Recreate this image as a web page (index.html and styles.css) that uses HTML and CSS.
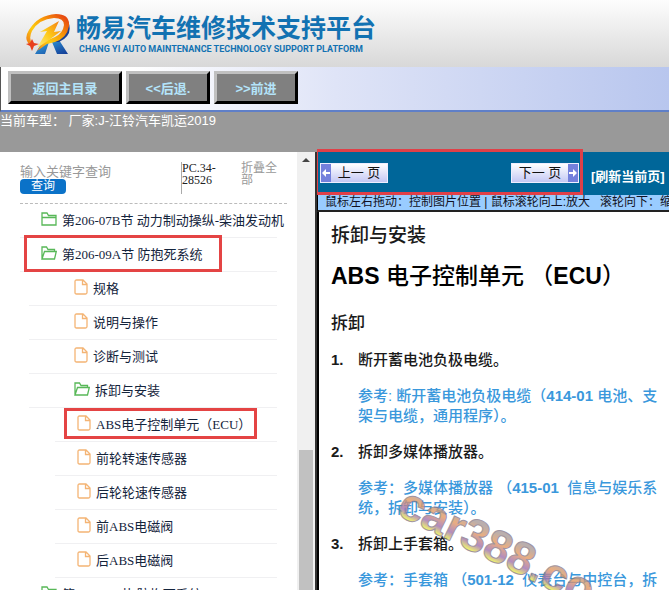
FILE: index.html
```
<!DOCTYPE html>
<html lang="zh-CN">
<head>
    <meta charset="utf-8">
    <title>畅易汽车维修技术支持平台</title>
    <link rel="stylesheet" href="styles.css">
</head>
<body>
    <svg class="symbols" aria-hidden="true">
        <symbol id="folder" viewBox="0 0 16 14">
            <path d="M1 13V1h5l1.500 2.500H15V13z M1 5.500h14"/>
        </symbol>
        <symbol id="folder-open" viewBox="0 0 16 14">
            <path d="M1 13V1h4.500l1.500 2.500h6.500v2 M1 13L3.500 5.500H15.300L13.500 13z"/>
        </symbol>
        <symbol id="file" viewBox="0 0 14 16">
            <path d="M1 2.500Q1 1 2.500 1H9l4 4v8.500q0 1.500-1.500 1.500H2.500Q1 15 1 13.500z M8.500 1v4.500H13"/>
        </symbol>
    </svg>

    <header class="header">
        <svg class="logo" viewBox="0 0 46 42" aria-hidden="true">
            <defs>
                <linearGradient id="flame" x1="0" y1="0.8" x2="0.8" y2="0">
                    <stop offset="0" stop-color="#f07818"/>
                    <stop offset="0.35" stop-color="#fccc10"/>
                    <stop offset="0.65" stop-color="#f99c08"/>
                    <stop offset="1" stop-color="#e84c10"/>
                </linearGradient>
                <linearGradient id="bolt" x1="0" y1="1" x2="1" y2="0">
                    <stop offset="0" stop-color="#fff080"/>
                    <stop offset="0.5" stop-color="#fdc818"/>
                    <stop offset="1" stop-color="#f47a10"/>
                </linearGradient>
                <linearGradient id="leg" x1="0" y1="0" x2="1" y2="1">
                    <stop offset="0" stop-color="#38b0ea"/>
                    <stop offset="1" stop-color="#123a94"/>
                </linearGradient>
            </defs>
            <path fill="url(#leg)" d="M16 31L24 29L20 41H10z M27 29L34 27L43 41H32z"/>
            <path fill="#1b3f92" d="M43 8Q49 22 34 29L29 29Q43 22 43 8z"/>
            <path fill="url(#flame)" d="M8 34Q-3 28 4 17Q13 2 31 1Q45 1 44 13Q42 25 30 29L22 31L12 38L18 29L30 24Q38 20 39 12Q39 5 29 5Q14 6 7 18Q3 26 8 32z"/>
            <path fill="url(#bolt)" d="M34 8L15 19L22 18L12 35L24 27L36 18L29 19z"/>
            <path fill="#e8401c" d="M7 26L9 30L14 31L9 33L7 38L5 33L1 31L5 30z"/>
        </svg>
        <div class="brand">
            <div class="brand-name">畅易汽车维修技术支持平台</div>
            <div class="brand-sub">CHANG YI AUTO MAINTENANCE TECHNOLOGY SUPPORT PLATFORM</div>
        </div>
    </header>

    <nav class="toolbar">
        <button class="tool-btn tool-home">返回主目录</button>
        <button class="tool-btn">&lt;&lt;后退.</button>
        <button class="tool-btn">&gt;&gt;前进</button>
    </nav>

    <div class="car-info">当前车型： 厂家:J-江铃汽车凯运2019</div>

    <main class="main">
        <aside class="sidebar">
            <div class="side-content">
                <form class="search">
                    <div class="search-box">
                        <input class="search-input" type="text" placeholder="输入关键字查询" aria-label="输入关键字查询">
                        <button class="search-btn" type="button">查询</button>
                    </div>
                    <div class="code">PC.34-<br>28526</div>
                    <a class="collapse" href="#">折叠全部</a>
                </form>
                <ul class="tree">
                    <li class="node"><a href="#"><svg class="icon folder"><use href="#folder"/></svg>第206-07B节 动力制动操纵-柴油发动机</a></li>
                    <li class="node"><a href="#" class="marked"><svg class="icon folder"><use href="#folder-open"/></svg>第206-09A节 防抱死系统</a></li>
                    <li class="node level2"><a href="#"><svg class="icon file"><use href="#file"/></svg>规格</a></li>
                    <li class="node level2"><a href="#"><svg class="icon file"><use href="#file"/></svg>说明与操作</a></li>
                    <li class="node level2"><a href="#"><svg class="icon file"><use href="#file"/></svg>诊断与测试</a></li>
                    <li class="node level2"><a href="#"><svg class="icon folder"><use href="#folder-open"/></svg>拆卸与安装</a></li>
                    <li class="node level3"><a href="#" class="marked"><svg class="icon file"><use href="#file"/></svg>ABS电子控制单元（ECU）</a></li>
                    <li class="node level3"><a href="#"><svg class="icon file"><use href="#file"/></svg>前轮转速传感器</a></li>
                    <li class="node level3"><a href="#"><svg class="icon file"><use href="#file"/></svg>后轮轮速传感器</a></li>
                    <li class="node level3"><a href="#"><svg class="icon file"><use href="#file"/></svg>前ABS电磁阀</a></li>
                    <li class="node level3"><a href="#"><svg class="icon file"><use href="#file"/></svg>后ABS电磁阀</a></li>
                    <li class="node"><a href="#"><svg class="icon folder"><use href="#folder"/></svg>第206-09B节 防抱死系统</a></li>
                </ul>
            </div>
            <div class="scrollbar">
                <div class="scroll-up"></div>
                <div class="scroll-thumb"></div>
            </div>
        </aside>

        <section class="viewer">
            <div class="pager">
                <div class="pager-btns">
                    <button class="page-btn"><svg class="arrow" viewBox="0 0 10 18"><path d="M1 9l4-4v3h4v2H5v3z"/></svg><span>上一 页</span></button>
                    <button class="page-btn"><span>下一 页</span><svg class="arrow" viewBox="0 0 10 18"><path d="M9 9L5 5v3H1v2h4v3z"/></svg></button>
                </div>
                <a class="refresh" href="#">[刷新当前页]</a>
            </div>
            <div class="hint">鼠标左右拖动：控制图片位置 | 鼠标滚轮向上:放大&nbsp;&nbsp; 滚轮向下：缩小</div>
            <article class="doc">
                <h3 class="doc-section">拆卸与安装</h3>
                <h1 class="doc-title"><b>ABS</b> 电子控制单元 （<b>ECU</b>）</h1>
                <h4 class="doc-part">拆卸</h4>
                <ol class="steps">
                    <li>
                        <p>断开蓄电池负极电缆。</p>
                        <p class="ref">参考: 断开蓄电池负极电缆（<b>414-01</b> 电池、支<br>架与电缆，通用程序）。</p>
                    </li>
                    <li>
                        <p>拆卸多媒体播放器。</p>
                        <p class="ref">参考：多媒体播放器 （<b>415-01</b>&nbsp; 信息与娱乐系<br>统，拆卸与安装）。</p>
                    </li>
                    <li>
                        <p>拆卸上手套箱。</p>
                        <p class="ref">参考：手套箱 （<b>501-12</b>&nbsp; 仪表台与中控台，拆</p>
                    </li>
                </ol>
                <svg class="watermark" viewBox="0 0 280 150" aria-hidden="true">
                    <defs>
                        <linearGradient id="shine" x1="0" y1="0" x2="0" y2="1">
                            <stop offset="0.25" stop-color="#a89a9a"/>
                            <stop offset="0.45" stop-color="#e59a62"/>
                            <stop offset="0.65" stop-color="#a070b0"/>
                            <stop offset="0.8" stop-color="#ecec50"/>
                        </linearGradient>
                    </defs>
                    <text x="10" y="32" transform="rotate(26 10 32)">car388.co</text>
                </svg>
            </article>
        </section>
    </main>
</body>
</html>
```
FILE: styles.css
```
* {
    box-sizing: border-box;
}

body {
    margin: 0;
    height: 100vh;
    display: flex;
    flex-direction: column;
    overflow: hidden;
    font-family: "Liberation Sans", "Noto Sans CJK SC", sans-serif;
    font-size: 13px;
    background-color: white;
}

a {
    color: inherit;
    text-decoration: none;
}

button {
    font-family: inherit;
    padding: 0;
}

.symbols {
    display: none;
}

/* header */
.header {
    display: flex;
    flex: none;
    align-items: center;
    height: 67px;
    padding-left: 25px;
    background: linear-gradient(#fdfdfd, #d8d8d8);
}

.logo {
    width: 46px;
    height: 42px;
}

.brand {
    margin-left: 5px;
    padding-top: 2px;
    color: #1272b2;
    font-weight: bold;
    white-space: nowrap;
}

.brand-name {
    font-size: 25px;
    line-height: 28px;
}

.brand-sub {
    padding-left: 3px;
    font-family: Roboto, "Liberation Sans", sans-serif;
    font-size: 9px;
    line-height: 14px;
}

/* toolbar */
.toolbar {
    display: flex;
    flex: none;
    gap: 4px;
    height: 45px;
    padding: 4px 7px;
    border-left: 1px solid #555;
    border-bottom: 2px solid #5f7fc8;
    background: linear-gradient(90deg, white 20%, #dfe4f7 50%, #b8c6ee);
}

.tool-btn {
    width: 84px;
    height: 33px;
    border: 3px solid;
    border-color: #c0c0c0 black black #c0c0c0;
    background-color: gray;
    color: #b4e4fa;
    font-size: 13px;
    font-weight: bold;
}

.tool-home {
    width: 114px;
}

.car-info {
    flex: none;
    height: 40px;
    background-color: #999;
    color: white;
    font-size: 13px;
    line-height: 18px;
}

.main {
    display: flex;
    flex: 1;
    min-height: 0;
}

/* left tree */
.sidebar {
    display: flex;
    flex: none;
    width: 317px;
    border-right: 2px solid #333;
    font-family: "Liberation Serif", "Noto Sans CJK SC", serif;
}

.side-content {
    flex: 1;
    min-width: 0;
    padding-left: 20px;
    overflow: hidden;
}

.search {
    display: flex;
    height: 52px;
    margin-right: 10px;
    padding-top: 10px;
    border-bottom: 1px dashed #bbb;
    line-height: 12px;
}

.search-box {
    display: flex;
    flex-direction: column;
    align-items: flex-start;
    width: 161px;
}

.search-input {
    width: 140px;
    height: 17px;
    padding: 2px 0 0;
    border: 0;
    font-family: inherit;
    font-size: 13px;
}

.search-input::placeholder {
    color: #999;
}

.search-btn {
    width: 46px;
    height: 15px;
    border: 0;
    border-radius: 4px;
    background-color: #0b72c8;
    color: white;
    font-size: 12px;
    line-height: 15px;
}

.code {
    width: 60px;
    height: 32px;
    border-left: 1px solid #aaa;
    color: #222;
    font-size: 12px;
}

.collapse {
    width: 38px;
    color: #999;
    font-size: 12px;
}

.tree {
    margin: 0;
    padding: 0;
    list-style: none;
    color: #14243c;
}

.node {
    display: flex;
    align-items: center;
    height: 34px;
    margin-right: 20px;
    padding: 0 0 3px 21px;
    border-bottom: 1px solid #f0f0f2;
    white-space: nowrap;
}

.level2 {
    margin-left: 9px;
    padding-left: 45px;
}

.level3 {
    margin-left: 35px;
    padding-left: 22px;
}

.node a {
    display: flex;
    align-items: center;
    gap: 5px;
    position: relative;
}

.marked::after {
    content: "";
    position: absolute;
    inset: -9px -20px -9px -17px;
    border: 3px solid #e44444;
}

.level3 .marked::after {
    inset: -6px -6px -6px -13px;
}

.icon {
    fill: none;
    stroke-width: 1.3;
}

.folder {
    width: 16px;
    height: 14px;
    stroke: #58b858;
}

.file {
    width: 14px;
    height: 16px;
    stroke: #f4b474;
}

.scrollbar {
    display: flex;
    flex-direction: column;
    justify-content: space-between;
    align-items: center;
    width: 18px;
    background-color: #f0f0f0;
}

.scroll-up {
    margin-top: 6px;
    border: 4px solid transparent;
    border-top: 0;
    border-bottom: 4px solid #444;
}

.scroll-thumb {
    width: 14px;
    height: 32%;
    background-color: #c1c1c1;
}

/* right pane */
.viewer {
    display: flex;
    flex-direction: column;
    flex: 1;
    min-width: 0;
    overflow-x: clip;
}

.pager {
    display: flex;
    flex: none;
    height: 43px;
    background-color: #069;
    white-space: nowrap;
}

.pager-btns {
    display: flex;
    align-items: center;
    justify-content: space-between;
    flex: none;
    position: relative;
    width: 266px;
    padding: 0 4px 2px 3px;
}

.pager-btns::after {
    content: "";
    position: absolute;
    inset: -3px 0 0 -2px;
    border: 3px solid #e04048;
    pointer-events: none;
}

.page-btn {
    display: flex;
    height: 20px;
    border: 1px solid #eef;
    background: linear-gradient(#fff, #c4c8f4);
    color: #111;
    font-size: 13px;
    line-height: 18px;
}

.page-btn span {
    width: 56px;
}

.arrow {
    width: 10px;
    height: 18px;
    background-color: #7480dc;
    fill: white;
}

.refresh {
    margin-left: 8px;
    padding-top: 4px;
    color: white;
    font-size: 13px;
    font-weight: bold;
    line-height: 42px;
}

.hint {
    flex: none;
    height: 17px;
    padding-left: 7px;
    border-left: 1px solid black;
    border-bottom: 2px solid #222;
    background-color: #9cf;
    color: #112;
    font-size: 12px;
    line-height: 15px;
    white-space: nowrap;
    overflow: hidden;
}

.doc {
    flex: 1;
    min-height: 0;
    position: relative;
    padding: 12px 0 0 12px;
    border-left: 2px solid black;
    overflow: hidden;
    color: #1a1a1a;
    white-space: nowrap;
}

.doc-section {
    margin: 0;
    font-size: 19px;
    font-weight: 500;
    line-height: 24px;
}

.doc-title {
    margin: 12px 0;
    color: black;
    font-size: 23px;
    font-weight: 500;
    line-height: 32px;
}

.doc-part {
    margin: 20px 0 14px;
    font-size: 17px;
    font-weight: 500;
    line-height: 24px;
}

.steps {
    margin: 0;
    padding: 0;
    list-style: none;
    counter-reset: step;
    font-size: 15px;
    font-weight: 500;
    line-height: 20px;
}

.steps li {
    display: grid;
    grid-template-columns: 27px 1fr;
    margin-bottom: 16px;
    counter-increment: step;
}

.steps li::before {
    content: counter(step) ".";
    font-weight: bold;
}

.steps p {
    margin: 0;
}

.steps .ref {
    grid-column: 2;
    margin-top: 16px;
    color: #3a98dc;
}

.watermark {
    position: absolute;
    left: 66px;
    top: 270px;
    width: 280px;
    height: 150px;
    font-size: 46px;
    font-weight: bold;
    fill: url(#shine);
    stroke: #8a7a8a;
    stroke-width: 1;
    opacity: 0.8;
}
```
